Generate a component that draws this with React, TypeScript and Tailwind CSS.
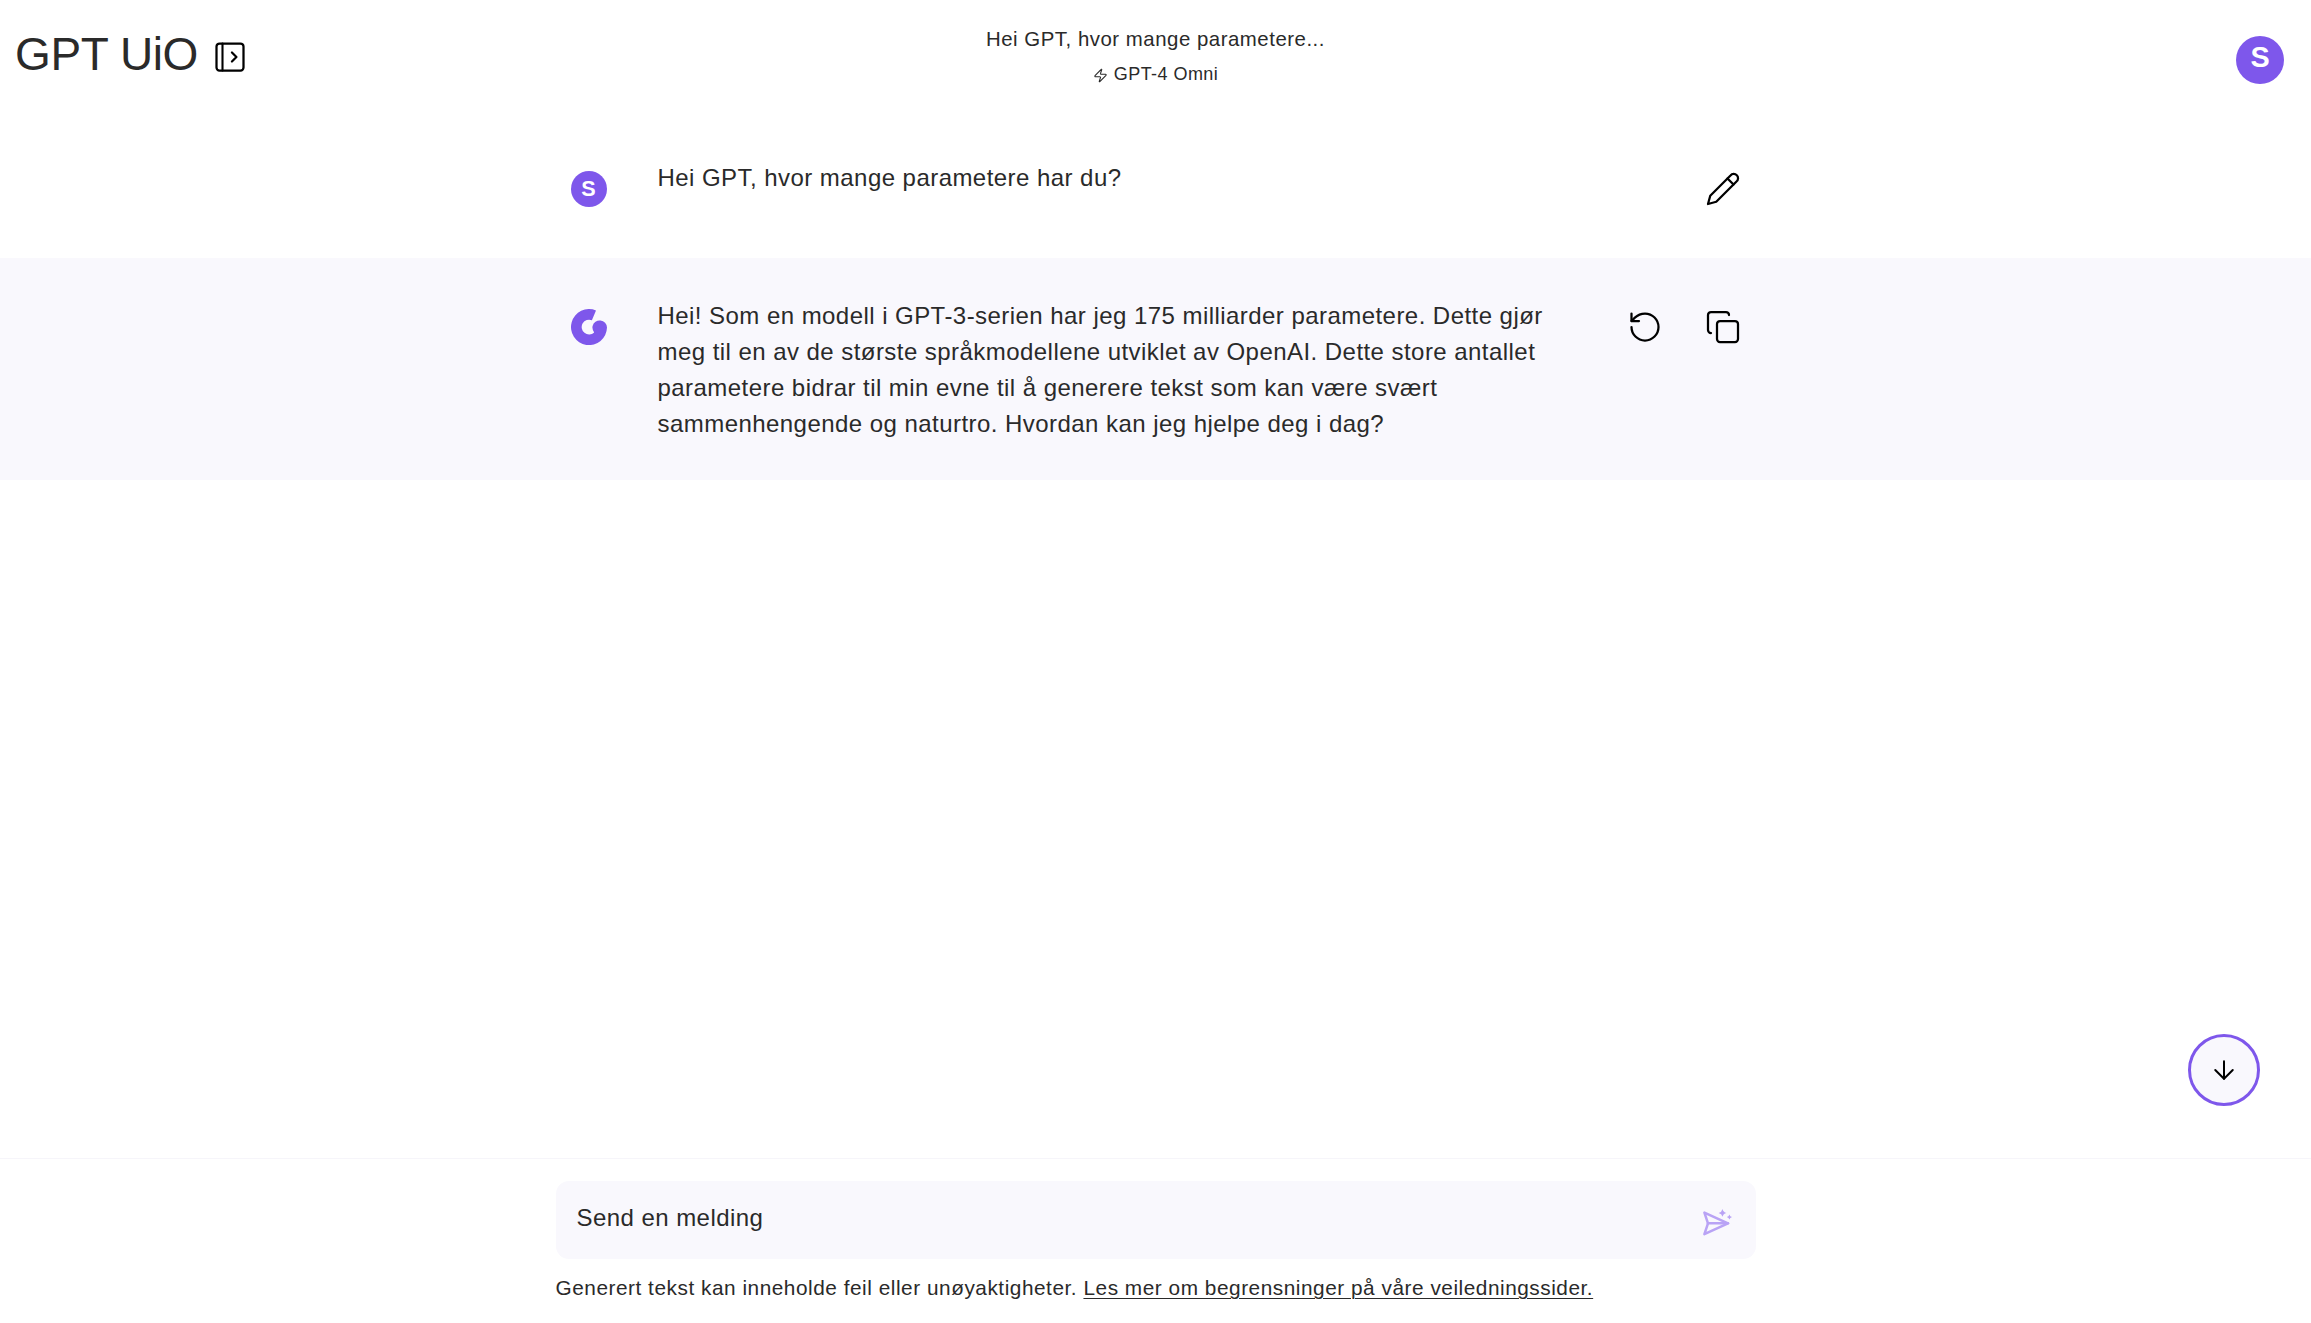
import React from "react";
import { ArrowDown, Copy, RotateCcw, Zap } from "lucide-react";

function PanelIcon() {
  return (
    <svg width="36" height="36" viewBox="0 0 24 24" fill="none" stroke="black" strokeWidth="1.5" strokeLinecap="round" strokeLinejoin="round">
      <rect x="3" y="3" width="18" height="18" rx="2" />
      <path d="M7 3v18" strokeWidth="1.4" />
      <path d="m13.3 9 3 3-3 3" strokeWidth="1.5" />
    </svg>
  );
}

function PencilIcon() {
  return (
    <svg width="36" height="36" viewBox="0 0 24 24" fill="none" stroke="black" strokeWidth="1.5" strokeLinecap="round" strokeLinejoin="round">
      <path d="M17 3a2.85 2.83 0 1 1 4 4L7.5 20.5 2 22l1.5-5.5Z" />
      <path d="m15 5 4 4" />
    </svg>
  );
}

function AssistantLogo() {
  return (
    <svg width="36" height="36" viewBox="0 0 36 36" fill="#7e57eb">
      <path d="M25 1.5A18 18 0 1 0 36 18.6A7.3 7.3 0 0 0 21.6 17Q20.8 20 23.2 23.4A7.4 7.4 0 1 1 20.9 11.2Z" />
    </svg>
  );
}

function SendIcon() {
  return (
    <svg width="32" height="30" viewBox="0 0 32 30" fill="none" stroke="#b9a3f5" strokeWidth="2.5" strokeLinejoin="round" strokeLinecap="round">
      <path d="M3.4 4.6 27 15.3 3.4 26.2 7 15.3Z" />
      <path d="M7 15.3H27" />
      <path d="M21.5 1Q22.2 4.2 25.4 4.9Q22.2 5.6 21.5 8.8Q20.8 5.6 17.6 4.9Q20.8 4.2 21.5 1Z" fill="#b9a3f5" stroke="none" />
      <path d="M28.4 6.4Q28.9 8.5 31 9Q28.9 9.5 28.4 11.6Q27.9 9.5 25.8 9Q27.9 8.5 28.4 6.4Z" fill="#b9a3f5" stroke="none" />
    </svg>
  );
}

export default function App() {
  return (
    <div className="flex h-[1323px] w-full flex-col bg-white font-['Liberation_Sans',Arial,sans-serif] text-[24px] leading-[36px] tracking-[0.45px] text-[#2a2a2a]">
      <header className="grid h-[120px] grid-cols-3 items-start">
        <div className="flex items-center pl-[15px] pt-[26px]">
          <h1 className="w-[185px] text-[46px] leading-[57px] tracking-[-0.4px] whitespace-nowrap">GPT UiO</h1>
          <button className="ml-[12px] mt-[5px]"><PanelIcon /></button>
        </div>
        <div className="flex flex-col items-center pt-[21px]">
          <div className="text-[20.4px] leading-[36px] tracking-[0.52px]">Hei GPT, hvor mange parametere...</div>
          <div className="flex items-center gap-[6px] text-[18px] leading-[34px]">
            <Zap size={15} strokeWidth={1.8} className="mt-[2px]" />
            GPT-4 Omni
          </div>
        </div>
        <div className="flex justify-end pr-[27px] pt-[36px]">
          <div className="h-[48px] w-[48px] rounded-full bg-[#7e57eb] text-center text-[28.8px] leading-[43px] font-bold tracking-normal text-white">S</div>
        </div>
      </header>

      <main className="flex-1">
        <section className="mx-auto flex h-[138px] w-[1200px] pt-[40px]">
          <div className="ml-[15px] mt-[11px] h-[36px] w-[36px] rounded-full bg-[#7e57eb] text-center text-[21.6px] leading-[35px] font-bold tracking-normal text-white">S</div>
          <p className="ml-[51px] w-[910px]">Hei GPT, hvor mange parametere har du?</p>
          <div className="ml-auto mr-[15px] mt-[11px]"><PencilIcon /></div>
        </section>

        <section className="h-[222px] bg-[#f9f8fd]">
          <div className="mx-auto flex w-[1200px] pt-[40px]">
            <div className="ml-[15px] mt-[11px]"><AssistantLogo /></div>
            <p className="ml-[51px] whitespace-nowrap">
              Hei! Som en modell i GPT-3-serien har jeg 175 milliarder parametere. Dette gjør<br />
              meg til en av de største språkmodellene utviklet av OpenAI. Dette store antallet<br />
              parametere bidrar til min evne til å generere tekst som kan være svært<br />
              sammenhengende og naturtro. Hvordan kan jeg hjelpe deg i dag?
            </p>
            <div className="ml-auto mr-[15px] mt-[11px] flex gap-[42px] text-black">
              <RotateCcw size={36} strokeWidth={1.5} />
              <Copy size={36} strokeWidth={1.5} />
            </div>
          </div>
        </section>
      </main>

      <button className="mr-[51px] mb-[52px] flex h-[72px] w-[72px] items-center justify-center self-end rounded-full border-[3px] border-[#7e57eb] bg-[#f9f8fd] text-black">
        <ArrowDown size={30} strokeWidth={1.6} />
      </button>

      <footer className="h-[165px] border-t border-[#f6f5fa]">
        <div className="mx-auto w-[1200px] pt-[22px]">
          <div className="flex h-[78px] items-start justify-between rounded-[13px] bg-[#f9f8fd] pt-[19px] pr-[23px] pl-[21px]">
            <span>Send en melding</span>
            <button className="mt-[8px]"><SendIcon /></button>
          </div>
          <p className="mt-[11px] text-[20.8px] tracking-[0.53px]">
            Generert tekst kan inneholde feil eller unøyaktigheter.{" "}
            <a href="#" className="underline decoration-1 underline-offset-[3px]">Les mer om begrensninger på våre veiledningssider.</a>
          </p>
        </div>
      </footer>
    </div>
  );
}
